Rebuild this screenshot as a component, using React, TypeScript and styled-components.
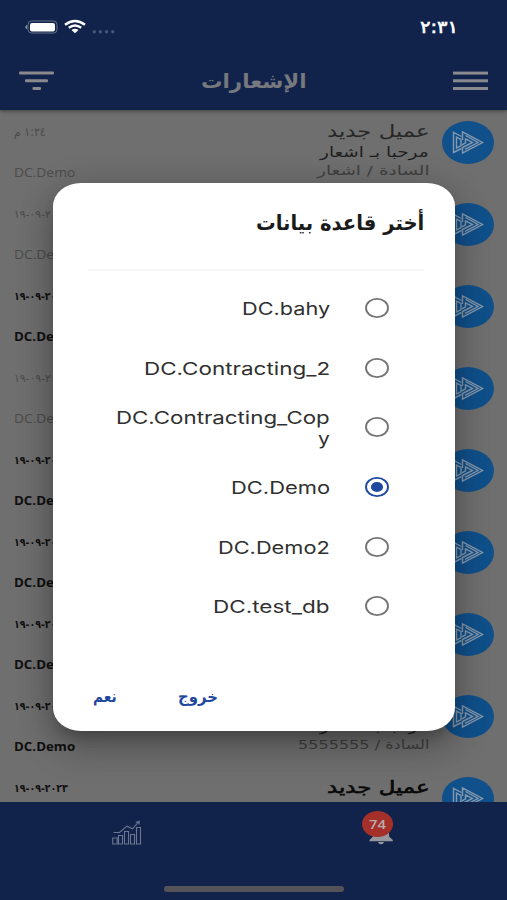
import React, { useLayoutEffect, useRef, useState } from "react";
import styled, { createGlobalStyle, css } from "styled-components";

const navy = "#11234b";
const arabic = '"DejaVu Sans", "Noto Sans", sans-serif';
const sans = 'Inter, "DejaVu Sans", sans-serif';
const list = '"Open Sans", "DejaVu Sans", sans-serif';

const Global = createGlobalStyle`
  * { box-sizing: border-box; }
  body { margin: 0; background: #6f6f6f; }
`;

/* Text stretched horizontally so that it fills a given width. */
const FitBox = styled.span<{ $w: number; $lh: number }>`
  display: block;
  flex: none;
  width: ${(p) => p.$w}px;
  height: ${(p) => p.$lh}px;
  direction: ltr;
`;
const FitInner = styled.span<{
  $size: number; $lh: number; $color: string; $weight: number; $font: string; $rtl?: boolean; $stroke?: number;
}>`
  display: inline-block;
  vertical-align: top;
  white-space: nowrap;
  transform-origin: 0 0;
  font: ${(p) => p.$weight} ${(p) => p.$size}px/${(p) => p.$lh}px ${(p) => p.$font};
  color: ${(p) => p.$color};
  ${(p) => (p.$stroke ? css`-webkit-text-stroke: ${p.$stroke}px ${p.$color};` : "")}
  ${(p) => (p.$rtl ? css`direction: rtl;` : css`direction: ltr; unicode-bidi: bidi-override;`)}
`;

interface FitProps {
  text: string; w: number; size: number; lh: number; color: string;
  weight?: number; font?: string; rtl?: boolean; stroke?: number;
}
function Fit({ text, w, size, lh, color, weight = 400, font = arabic, rtl, stroke }: FitProps) {
  const ref = useRef<HTMLSpanElement>(null);
  const [scale, setScale] = useState(1);
  useLayoutEffect(() => {
    if (ref.current && ref.current.offsetWidth) setScale(w / ref.current.offsetWidth);
  }, [text, w, size]);
  return (
    <FitBox $w={w} $lh={lh}>
      <FitInner ref={ref} $size={size} $lh={lh} $color={color} $weight={weight} $font={font} $rtl={rtl} $stroke={stroke}
        style={{ transform: `scaleX(${scale})` }}>
        {text}
      </FitInner>
    </FitBox>
  );
}

const Screen = styled.div`
  position: relative;
  width: 507px;
  height: 900px;
  overflow: hidden;
  display: flex;
  flex-direction: column;
  background: #6f6f6f;
`;
const Header = styled.header`
  flex: none;
  height: 110px;
  background: ${navy};
  box-shadow: 0 1px 4px rgba(0, 0, 0, 0.45);
  z-index: 1;
`;
const StatusBar = styled.div`
  height: 52px;
  padding: 2px 49px 0 25px;
  display: flex;
  justify-content: space-between;
  align-items: center;
`;
const TitleBar = styled.div`
  height: 58px;
  padding: 0 19px;
  display: flex;
  align-items: center;
  justify-content: space-between;
`;
const Feed = styled.main`
  flex: 1;
  min-height: 0;
  overflow: hidden;
`;
const Row = styled.article`
  height: 82px;
  padding: 11px 13px 0 14px;
  display: flex;
`;
const Meta = styled.div`
  display: flex;
  flex-direction: column;
  gap: 21px;
  padding-top: 2px;
`;
const Message = styled.div`
  flex: 1;
  display: flex;
  flex-direction: column;
  align-items: flex-end;
  padding-right: 13px;
`;
const Footer = styled.footer`
  flex: none;
  height: 98px;
  background: ${navy};
  display: flex;
  flex-direction: column;
  justify-content: space-between;
  align-items: center;
  padding-bottom: 8px;
`;
const Tabs = styled.nav`
  width: 100%;
  display: grid;
  grid-template-columns: 1fr 1fr;
  justify-items: center;
  height: 60px;
  align-items: center;
`;
const BellTab = styled.div`
  position: relative;
  width: 32px;
  height: 36px;
  margin-top: -4px;
`;
const BellIcon = styled.svg`
  position: absolute;
  left: 4px;
  top: 10px;
`;
const Badge = styled.span`
  position: absolute;
  left: -2px;
  top: -1px;
  width: 31px;
  height: 26px;
  border-radius: 50%;
  background: #a5302a;
  display: flex;
  align-items: center;
  justify-content: center;
`;
const HomeBar = styled.div`
  width: 180px;
  height: 6px;
  border-radius: 3px;
  background: #55535a;
`;
const Dialog = styled.section`
  position: absolute;
  left: 53px;
  top: 183px;
  width: 402px;
  height: 548px;
  border-radius: 28px / 23px;
  background: #fff;
  z-index: 2;
  box-shadow: 0 10px 16px -6px rgba(0, 0, 0, 0.26), 0 18px 36px 2px rgba(0, 0, 0, 0.16), 0 6px 34px 4px rgba(0, 0, 0, 0.14);
  display: flex;
  flex-direction: column;
`;
const DialogTitle = styled.div`
  margin: 0 31px 0 35px;
  height: 88px;
  padding-top: 24px;
  border-bottom: 2px solid #f6f6f6;
  display: flex;
  justify-content: flex-end;
`;
const Options = styled.div`
  padding-top: 7px;
  flex: 1;
`;
const Option = styled.label`
  height: 59.7px;
  padding-right: 65px;
  display: flex;
  align-items: center;
  justify-content: flex-end;
  gap: 34px;
`;
const Lines = styled.div`
  display: flex;
  flex-direction: column;
  align-items: flex-end;
  padding-top: 1px;
`;
const Actions = styled.div`
  height: 58px;
  padding: 11px 0 0 40px;
  display: flex;
  gap: 61px;
`;

const Logo = () => (
  <svg width="52" height="43" viewBox="0 0 52 43">
    <ellipse cx="26" cy="21.5" rx="26" ry="21.5" fill="#10508b" />
    <g fill="none" stroke="#8799ac" strokeWidth="1.4" strokeLinejoin="miter">
      <path d="M19.5 15.5 L11.5 11.3 V31.5 L19.5 27.5" />
      <path d="M14.5 27 V16.2 L19 18.5 V24.5 Z" />
      <path d="M20.5 19 V11 L40.5 21.5 L20.5 32 V26.5 L30.5 21.5 L23.5 17.8 V21.8 L20 23.8" />
      <path d="M23.5 14.5 L36 21.5 L23 28.3" />
    </g>
  </svg>
);

const Radio = ({ on }: { on?: boolean }) => (
  <svg width="26" height="22" viewBox="0 0 26 22">
    <ellipse cx="13" cy="11" rx="11" ry="9.1" fill="none" stroke={on ? "#1f48a0" : "#757575"} strokeWidth="1.9" />
    {on && <ellipse cx="13" cy="11" rx="6.1" ry="5.1" fill="#1f48a0" />}
  </svg>
);

const items = [0, 1, 2, 3, 4, 5, 6, 7, 8].map((i) => ({
  id: i,
  unread: i > 1 && i !== 3,
  today: i === 0,
  party: i === 7 ? "السادة / 5555555" : "السادة / اشعار",
  partyWidth: i === 7 ? 131 : 112,
}));

const options = [
  { lines: [["DC.bahy", 88]] },
  { lines: [["DC.Contracting_2", 186]] },
  { lines: [["DC.Contracting_Cop", 214], ["y", 12]] },
  { lines: [["DC.Demo", 99]], on: true },
  { lines: [["DC.Demo2", 112]] },
  { lines: [["DC.test_db", 117]] },
] as { lines: [string, number][]; on?: boolean }[];

export default function App() {
  return (
    <>
      <Global />
      <Screen>
        <Header>
          <StatusBar>
            <svg width="92" height="18" viewBox="0 0 92 18">
              <rect x="3" y="3" width="29" height="12" rx="3.5" fill="none" stroke="#66718c" />
              <rect x="5" y="5" width="25" height="8.5" rx="2" fill="#fff" />
              <path d="M1.5 7.5 Q0 9 1.5 10.8Z" fill="#8c95ab" stroke="#8c95ab" />
              <g fill="none" stroke="#fff" strokeWidth="2.4">
                <path d="M40 6.8 Q50 -0.8 60 6.8" />
                <path d="M43.8 9.8 Q50 5.3 56.2 9.8" />
              </g>
              <path d="M46.5 12 Q50 9.5 53.5 12 L50 15.2Z" fill="#fff" />
              <g fill="#46557a">
                <circle cx="69.3" cy="13.7" r="1.7" /><circle cx="75.3" cy="13.7" r="1.7" />
                <circle cx="81.5" cy="13.7" r="1.7" /><circle cx="87.7" cy="13.7" r="1.7" />
              </g>
            </svg>
            <Fit text="٢:٣١" w={38} size={17} lh={24} color="#fff" stroke={0.6} />
          </StatusBar>
          <TitleBar>
            <svg width="35" height="20" viewBox="0 0 35 20" fill="#8a8a8e">
              <rect x="0" y="0.6" width="35" height="3" rx="1" />
              <rect x="6" y="8.3" width="23" height="3" rx="1" />
              <rect x="13.5" y="16" width="8.5" height="3" rx="1" />
            </svg>
            <Fit text="الإشعارات" w={106} size={20} lh={30} color="#77797f" weight={700} rtl />
            <svg width="35" height="20" viewBox="0 0 35 20" fill="#8a8a8e">
              <rect y="0.6" width="35" height="3" /><rect y="8.3" width="35" height="3" /><rect y="16" width="35" height="3" />
            </svg>
          </TitleBar>
        </Header>
        <Feed>
          {items.map((m) => {
            const faint = m.unread ? "#101010" : "#4b4b4b";
            return (
              <Row key={m.id}>
                <Meta>
                  {m.today
                    ? <Fit text="١:٢٤ م" w={32} size={12} lh={19} color={faint} rtl />
                    : <Fit text="١٩-٠٩-٢٠٢٣" w={54} size={11} lh={19} color={faint} weight={m.unread ? 700 : 400} />}
                  <Fit text="DC.Demo" w={61} size={12} lh={19} color={faint} weight={m.unread ? 700 : 400} font={list} />
                </Meta>
                <Message>
                  <Fit text="عميل جديد" w={102} size={17} lh={20} color={m.unread ? "#080808" : "#262626"} stroke={m.unread ? 0.6 : 0} rtl />
                  <Fit text="مرحبا بـ اشعار" w={109} size={14} lh={22} color="#1e1e1e" rtl />
                  <Fit text={m.party} w={m.partyWidth} size={13} lh={16} color="#404040" rtl />
                </Message>
                <Logo />
              </Row>
            );
          })}
        </Feed>
        <Footer>
          <Tabs>
            <svg width="30" height="25" viewBox="0 0 30 25" fill="none" stroke="#6b7690" strokeWidth="1.1">
              <path d="M0.7 18h4.5v6H0.7zM6.5 15.5h4v8.5h-4zM12.5 11.5h4V24h-4zM18.5 14.5h4V24h-4zM24.5 7.5h4V24h-4z" />
              <path d="M1.5 12.5 H7.5 L15 6.2 L20.5 8.8 L27 1.5 M23.8 2.5 L27.2 1.2 L27 4.5" />
            </svg>
            <BellTab>
              <BellIcon width="26" height="23" viewBox="0 0 26 23" fill="#96969b">
                <path d="M1.5 18 L5 14.5 V9 Q5 2 13 1 Q21 2 21 9 V14.5 L24.8 18 V19.2 H1.5Z" />
                <path d="M10 20 H16 Q15.5 22.3 13 22.3 Q10.5 22.3 10 20Z" />
              </BellIcon>
              <Badge><Fit text="74" w={17} size={13} lh={18} color="#b8acac" weight={600} font={list} /></Badge>
            </BellTab>
          </Tabs>
          <HomeBar />
        </Footer>
        <Dialog>
          <DialogTitle>
            <Fit text="أختر قاعدة بيانات" w={168} size={21} lh={32} color="#1b1b1b" weight={700} rtl />
          </DialogTitle>
          <Options>
            {options.map((o) => (
              <Option key={o.lines[0][0]}>
                <Lines>
                  {o.lines.map(([t, w]) => (
                    <Fit key={t} text={t} w={w} size={17.5} lh={21} color="#303030" font={sans} />
                  ))}
                </Lines>
                <Radio on={o.on} />
              </Option>
            ))}
          </Options>
          <Actions>
            <Fit text="نعم" w={24} size={16} lh={26} color="#1f48a0" weight={700} rtl />
            <Fit text="خروج" w={40} size={16} lh={26} color="#1f48a0" weight={700} rtl />
          </Actions>
        </Dialog>
      </Screen>
    </>
  );
}
